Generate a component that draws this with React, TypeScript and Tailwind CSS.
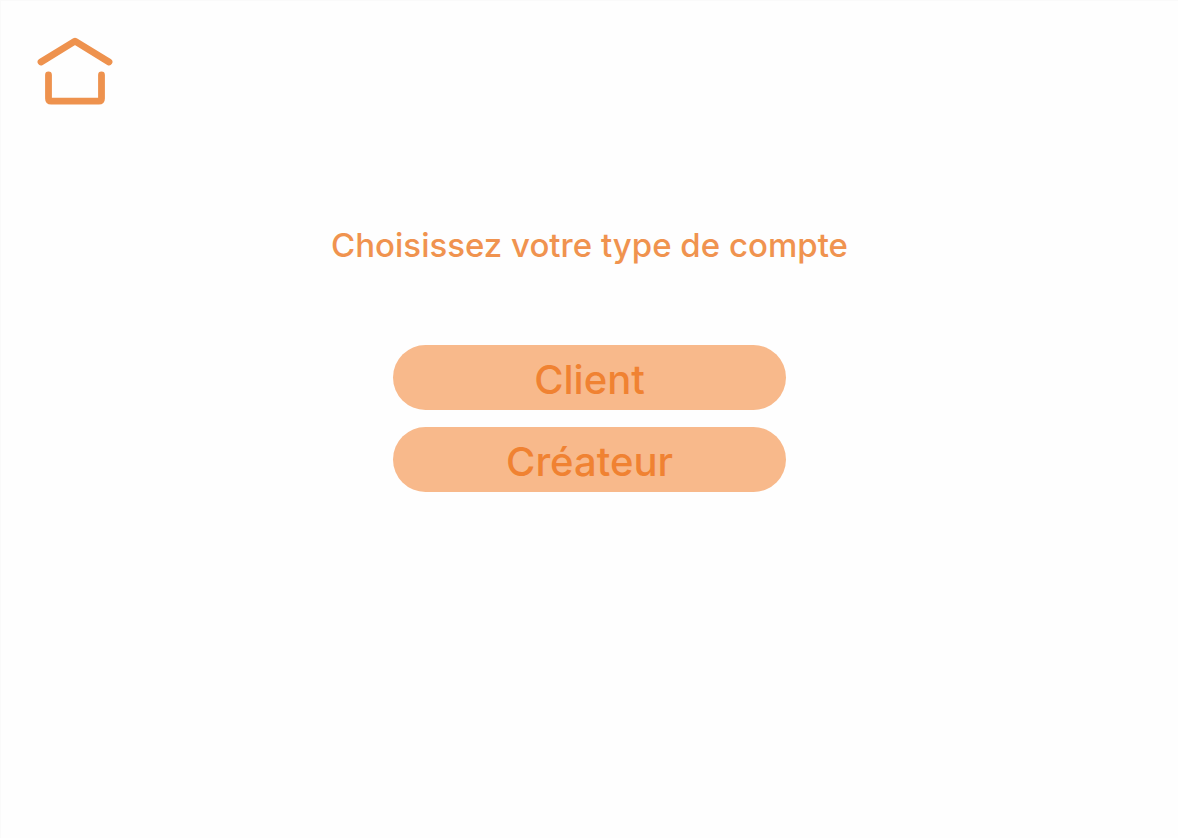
export default function App() {
  return (
    <div className="flex min-h-screen flex-col border-t border-l border-[#fafafa] bg-[#fefefe] font-['Inter',sans-serif]">
      <header className="px-9 pt-9">
        <a href="#" aria-label="Accueil" className="block w-20">
          <svg viewBox="0 0 80 70" className="h-[70px] w-20" fill="none" stroke="#ee924e" strokeWidth="6.800" strokeLinecap="round" strokeLinejoin="round">
            <path d="M4 25 L38 4.200 L72 25" />
            <path d="M11.500 38 V61.500 Q11.500 64.200 14.200 64.200 H61.800 Q64.500 64.200 64.500 61.500 V38" />
          </svg>
        </a>
      </header>
      <main className="flex flex-col items-center pt-[114px]">
        <h1 className="text-[33px] leading-12 font-medium text-[#f0934f]">Choisissez votre type de compte</h1>
        <div className="mt-[76px] flex w-[393px] max-w-full flex-col gap-[17px]">
          <button type="button" className="h-[65px] rounded-full bg-[#f8b98b] pt-1 text-[40px] leading-none font-medium text-[#f08232]">Client</button>
          <button type="button" className="h-[65px] rounded-full bg-[#f8b98b] pt-1 text-[40px] leading-none font-medium text-[#f08232]">Créateur</button>
        </div>
      </main>
    </div>
  );
}
